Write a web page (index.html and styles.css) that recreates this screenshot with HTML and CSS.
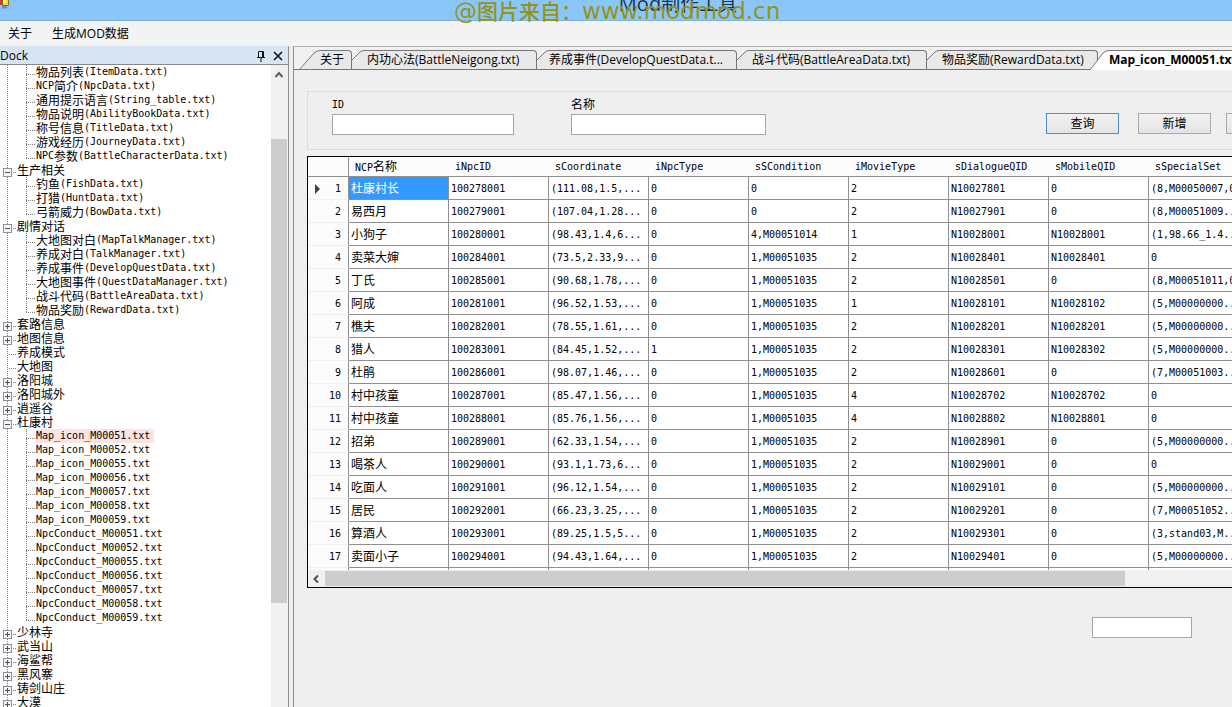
FILE: index.html
```html
<!DOCTYPE html>
<html lang="zh-CN">
<head>
<meta charset="utf-8">
<title>Mod制作工具</title>
<link rel="stylesheet" href="styles.css">
</head>
<body>
<div class="window">
  <header class="titlebar">
    <svg class="app-icon" width="11" height="9" viewBox="0 0 11 9"><path fill="#c8452c" d="M0 0h2v5H0z"/><path fill="#f5d33c" stroke="#8a6a20" d="M2.500-2h6v7.500h-6z"/><path fill="#5d8fe0" d="M2 6h5v2.500H2z"/><path fill="#fff3a0" d="M3 0h3v3H3z"/></svg>
    <h1 class="title">Mod<span class="title-cjk">制作工具</span></h1>
    <div class="watermark">@<span class="watermark-cjk">图片来自：</span>www.modmod.cn</div>
  </header>
  <nav class="menubar">
    <button class="menu-item">关于</button>
    <button class="menu-item">生成MOD数据</button>
  </nav>
  <div class="workspace">
    <aside class="dock">
      <div class="dock-head">
        <span class="dock-title">Dock</span>
        <button class="dock-btn" aria-label="固定"><svg width="10" height="12" viewBox="0 0 10 12"><path d="M2.500 7V1.500h5V7M6.500 2v5M1 7.500h8M5 8v4" fill="none" stroke="#111"/></svg></button>
        <button class="dock-btn" aria-label="关闭"><svg width="10" height="12" viewBox="0 0 10 12"><path d="M1 2l8 8M9 2l-8 8" fill="none" stroke="#111" stroke-width="1.600"/></svg></button>
      </div>
      <div class="dock-body">
        <ul class="tree">
          <li>
            <ul class="branch">
              <li><b>物品列表</b>(ItemData.txt)</li>
              <li>NCP<b>简介</b>(NpcData.txt)</li>
              <li><b>通用提示语言</b>(String_table.txt)</li>
              <li><b>物品说明</b>(AbilityBookData.txt)</li>
              <li><b>称号信息</b>(TitleData.txt)</li>
              <li><b>游戏经历</b>(JourneyData.txt)</li>
              <li>NPC<b>参数</b>(BattleCharacterData.txt)</li>
            </ul>
          </li>
          <li>
            <div class="node"><button class="toggle open" aria-label="折叠"></button><b>生产相关</b></div>
            <ul class="branch">
              <li><b>钓鱼</b>(FishData.txt)</li>
              <li><b>打猎</b>(HuntData.txt)</li>
              <li><b>弓箭威力</b>(BowData.txt)</li>
            </ul>
          </li>
          <li>
            <div class="node"><button class="toggle open" aria-label="折叠"></button><b>剧情对话</b></div>
            <ul class="branch">
              <li><b>大地图对白</b>(MapTalkManager.txt)</li>
              <li><b>养成对白</b>(TalkManager.txt)</li>
              <li><b>养成事件</b>(DevelopQuestData.txt)</li>
              <li><b>大地图事件</b>(QuestDataManager.txt)</li>
              <li><b>战斗代码</b>(BattleAreaData.txt)</li>
              <li><b>物品奖励</b>(RewardData.txt)</li>
            </ul>
          </li>
          <li><div class="node"><button class="toggle" aria-label="展开"></button><b>套路信息</b></div></li>
          <li><div class="node"><button class="toggle" aria-label="展开"></button><b>地图信息</b></div></li>
          <li><div class="node leaf"><b>养成模式</b></div></li>
          <li><div class="node leaf"><b>大地图</b></div></li>
          <li><div class="node"><button class="toggle" aria-label="展开"></button><b>洛阳城</b></div></li>
          <li><div class="node"><button class="toggle" aria-label="展开"></button><b>洛阳城外</b></div></li>
          <li><div class="node"><button class="toggle" aria-label="展开"></button><b>逍遥谷</b></div></li>
          <li>
            <div class="node"><button class="toggle open" aria-label="折叠"></button><b>杜康村</b></div>
            <ul class="branch">
              <li><span class="current">Map_icon_M00051.txt</span></li>
              <li>Map_icon_M00052.txt</li>
              <li>Map_icon_M00055.txt</li>
              <li>Map_icon_M00056.txt</li>
              <li>Map_icon_M00057.txt</li>
              <li>Map_icon_M00058.txt</li>
              <li>Map_icon_M00059.txt</li>
              <li>NpcConduct_M00051.txt</li>
              <li>NpcConduct_M00052.txt</li>
              <li>NpcConduct_M00055.txt</li>
              <li>NpcConduct_M00056.txt</li>
              <li>NpcConduct_M00057.txt</li>
              <li>NpcConduct_M00058.txt</li>
              <li>NpcConduct_M00059.txt</li>
            </ul>
          </li>
          <li><div class="node"><button class="toggle" aria-label="展开"></button><b>少林寺</b></div></li>
          <li><div class="node"><button class="toggle" aria-label="展开"></button><b>武当山</b></div></li>
          <li><div class="node"><button class="toggle" aria-label="展开"></button><b>海鲨帮</b></div></li>
          <li><div class="node"><button class="toggle" aria-label="展开"></button><b>黑风寨</b></div></li>
          <li><div class="node"><button class="toggle" aria-label="展开"></button><b>铸剑山庄</b></div></li>
          <li><div class="node"><button class="toggle" aria-label="展开"></button><b>大漠</b></div></li>
        </ul>
        <div class="vscroll">
          <svg class="arrow" width="16" height="17" viewBox="0 0 16 17"><path d="M4.500 12L8 8l3.500 4" fill="none" stroke="#606060" stroke-width="2"/></svg>
          <div class="before"></div><div class="thumb"></div><div class="after"></div>
        </div>
      </div>
    </aside>
    <main class="document">
      <div class="tabs">
        <button class="tab first"><svg class="edge" width="20" height="19" viewBox="0 0 20 19"><path class="fill" d="M0 19L14 3Q17 .5 20 .5V19z"/><path class="line" d="M0 19L14 3Q17 .5 20 .5"/></svg><span>关于</span></button>
        <button class="tab t2"><svg class="edge" width="12" height="19" viewBox="0 0 12 19"><path class="fill" d="M0 19V10L7 3Q9 .5 12 .5V19z"/><path class="line" d="M0 10L7 3Q9 .5 12 .5"/></svg><span>内功心法(BattleNeigong.txt)</span></button>
        <button class="tab t3"><svg class="edge" width="12" height="19" viewBox="0 0 12 19"><path class="fill" d="M0 19V10L7 3Q9 .5 12 .5V19z"/><path class="line" d="M0 10L7 3Q9 .5 12 .5"/></svg><span>养成事件(DevelopQuestData.t...</span></button>
        <button class="tab t4"><svg class="edge" width="12" height="19" viewBox="0 0 12 19"><path class="fill" d="M0 19V10L7 3Q9 .5 12 .5V19z"/><path class="line" d="M0 10L7 3Q9 .5 12 .5"/></svg><span>战斗代码(BattleAreaData.txt)</span></button>
        <button class="tab t5"><svg class="edge" width="12" height="19" viewBox="0 0 12 19"><path class="fill" d="M0 19V10L7 3Q9 .5 12 .5V19z"/><path class="line" d="M0 10L7 3Q9 .5 12 .5"/></svg><span>物品奖励(RewardData.txt)</span></button>
        <button class="tab active"><svg class="edge" width="19" height="20" viewBox="0 0 19 20"><path class="fill" d="M0 20L13 3Q16 .5 19 .5V20z"/><path class="line" d="M0 20L13 3Q16 .5 19 .5"/></svg><span>Map_icon_M00051.txt</span></button>
      </div>
      <form class="filter">
        <div class="field"><label for="fid" class="mono">ID</label><input id="fid" type="text" class="w-id"></div>
        <div class="field"><label for="fname">名称</label><input id="fname" type="text" class="w-name"></div>
        <div class="actions">
          <button type="button" class="btn primary">查询</button>
          <button type="button" class="btn">新增</button>
          <button type="button" class="btn last" aria-label="操作"></button>
        </div>
      </form>
      <section class="gridbox">
        <div class="gridview">
          <table>
            <colgroup><col class="c-head"><col><col><col><col><col><col><col><col><col></colgroup>
            <thead><tr><th class="corner"></th><th>NCP<b>名称</b></th><th>iNpcID</th><th>sCoordinate</th><th>iNpcType</th><th>sSCondition</th><th>iMovieType</th><th>sDialogueQID</th><th>sMobileQID</th><th>sSpecialSet</th></tr></thead>
            <tbody>
              <tr><th><div class="rowhead"><svg width="5" height="10" viewBox="0 0 5 10"><path d="M0 0l5 5-5 5z" fill="#404040"/></svg>1</div></th><td class="selected"><b>杜康村长</b></td><td>100278001</td><td>(111.08,1.5,...</td><td>0</td><td>0</td><td>2</td><td>N10027801</td><td>0</td><td>(8,M00050007,0)</td></tr>
              <tr><th>2</th><td><b>易西月</b></td><td>100279001</td><td>(107.04,1.28...</td><td>0</td><td>0</td><td>2</td><td>N10027901</td><td>0</td><td>(8,M00051009...</td></tr>
              <tr><th>3</th><td><b>小狗子</b></td><td>100280001</td><td>(98.43,1.4,6...</td><td>0</td><td>4,M00051014</td><td>1</td><td>N10028001</td><td>N10028001</td><td>(1,98.66_1.4...</td></tr>
              <tr><th>4</th><td><b>卖菜大婶</b></td><td>100284001</td><td>(73.5,2.33,9...</td><td>0</td><td>1,M00051035</td><td>2</td><td>N10028401</td><td>N10028401</td><td>0</td></tr>
              <tr><th>5</th><td><b>丁氏</b></td><td>100285001</td><td>(90.68,1.78,...</td><td>0</td><td>1,M00051035</td><td>2</td><td>N10028501</td><td>0</td><td>(8,M00051011,0)</td></tr>
              <tr><th>6</th><td><b>阿成</b></td><td>100281001</td><td>(96.52,1.53,...</td><td>0</td><td>1,M00051035</td><td>1</td><td>N10028101</td><td>N10028102</td><td>(5,M00000000...</td></tr>
              <tr><th>7</th><td><b>樵夫</b></td><td>100282001</td><td>(78.55,1.61,...</td><td>0</td><td>1,M00051035</td><td>2</td><td>N10028201</td><td>N10028201</td><td>(5,M00000000...</td></tr>
              <tr><th>8</th><td><b>猎人</b></td><td>100283001</td><td>(84.45,1.52,...</td><td>1</td><td>1,M00051035</td><td>2</td><td>N10028301</td><td>N10028302</td><td>(5,M00000000...</td></tr>
              <tr><th>9</th><td><b>杜鹃</b></td><td>100286001</td><td>(98.07,1.46,...</td><td>0</td><td>1,M00051035</td><td>2</td><td>N10028601</td><td>0</td><td>(7,M00051003...</td></tr>
              <tr><th>10</th><td><b>村中孩童</b></td><td>100287001</td><td>(85.47,1.56,...</td><td>0</td><td>1,M00051035</td><td>4</td><td>N10028702</td><td>N10028702</td><td>0</td></tr>
              <tr><th>11</th><td><b>村中孩童</b></td><td>100288001</td><td>(85.76,1.56,...</td><td>0</td><td>1,M00051035</td><td>4</td><td>N10028802</td><td>N10028801</td><td>0</td></tr>
              <tr><th>12</th><td><b>招弟</b></td><td>100289001</td><td>(62.33,1.54,...</td><td>0</td><td>1,M00051035</td><td>2</td><td>N10028901</td><td>0</td><td>(5,M00000000...</td></tr>
              <tr><th>13</th><td><b>喝茶人</b></td><td>100290001</td><td>(93.1,1.73,6...</td><td>0</td><td>1,M00051035</td><td>2</td><td>N10029001</td><td>0</td><td>0</td></tr>
              <tr><th>14</th><td><b>吃面人</b></td><td>100291001</td><td>(96.12,1.54,...</td><td>0</td><td>1,M00051035</td><td>2</td><td>N10029101</td><td>0</td><td>(5,M00000000...</td></tr>
              <tr><th>15</th><td><b>居民</b></td><td>100292001</td><td>(66.23,3.25,...</td><td>0</td><td>1,M00051035</td><td>2</td><td>N10029201</td><td>0</td><td>(7,M00051052...</td></tr>
              <tr><th>16</th><td><b>算酒人</b></td><td>100293001</td><td>(89.25,1.5,5...</td><td>0</td><td>1,M00051035</td><td>2</td><td>N10029301</td><td>0</td><td>(3,stand03,M...</td></tr>
              <tr><th>17</th><td><b>卖面小子</b></td><td>100294001</td><td>(94.43,1.64,...</td><td>0</td><td>1,M00051035</td><td>2</td><td>N10029401</td><td>0</td><td>(5,M00000000...</td></tr>
              <tr><th></th><td></td><td></td><td></td><td></td><td></td><td></td><td></td><td></td><td></td></tr>
            </tbody>
          </table>
        </div>
        <div class="hscroll">
          <svg class="arrow" width="17" height="16" viewBox="0 0 17 16"><path d="M10 4.500L6.500 8l3.500 3.500" fill="none" stroke="#505050" stroke-width="2"/></svg>
          <div class="thumb"></div><div class="after"></div>
        </div>
      </section>
      <footer class="foot"><input type="text" class="w-foot" aria-label="页码"></footer>
    </main>
  </div>
</div>
</body>
</html>
```
FILE: styles.css
```css
* { box-sizing: border-box; }
html, body { height: 100%; margin: 0; }
body {
  overflow: hidden;
  background: #efefef;
  color: #000;
  font: 12px/14px "Open Sans", "Noto Sans CJK SC", sans-serif;
}
button, input { font: inherit; color: inherit; margin: 0; border-radius: 0; }
button { padding: 0; border: 0; background: none; }
ul { margin: 0; padding: 0; list-style: none; }
b {
  font: 12px/14px "Noto Sans CJK SC", sans-serif;
}

.window { display: flex; flex-direction: column; height: 100vh; }

.titlebar {
  position: relative;
  display: flex;
  justify-content: center;
  flex: none;
  height: 21px;
  background: #8bc6fb;
  border-bottom: 1px solid #7fb0dc;
}
.app-icon { position: absolute; left: 0; top: 0; }
.title {
  margin: -9px 0 0 124px;
  color: #1c3450;
  font: 20px/26px "Open Sans", "Noto Sans CJK SC", sans-serif;
}
.title-cjk { font-size: 19px; }
.watermark {
  position: absolute;
  left: 454px;
  top: -2px;
  color: #949412;
  font: 23px/24px "DejaVu Sans", "Noto Sans CJK SC", sans-serif;
  white-space: nowrap;
}
.watermark-cjk { font-family: "Noto Sans CJK SC", sans-serif; font-size: 21px; font-weight: 500; }

.menubar {
  display: flex;
  flex: none;
  gap: 20px;
  height: 25px;
  padding: 0 8px;
  background: #f3f3f3;
}

.workspace { display: flex; flex: 1; min-height: 0; gap: 4px; }

.dock {
  display: flex;
  flex-direction: column;
  flex: none;
  width: 289px;
  border-right: 1px solid #8e8e8e;
}
.dock-head {
  display: flex;
  align-items: center;
  gap: 7px;
  flex: none;
  height: 19px;
  padding: 1px 5px 0 0;
  background: #d7e4f2;
  border-bottom: 1px solid #888;
}
.dock-title { flex: 1; }
.dock-btn { display: flex; }
.dock-body { display: flex; flex: 1; min-height: 0; background: #fff; }

.tree {
  flex: 1;
  overflow: hidden;
  background: repeating-linear-gradient(#808080 0 1px, transparent 1px 2px) 7px 0 / 1px 100% no-repeat;
  font: 10px/14px "DejaVu Sans Mono", monospace;
  white-space: nowrap;
}
.node { display: flex; height: 14px; }
.node::after {
  content: "";
  order: 1;
  width: 5px;
  height: 1px;
  margin-top: 9px;
  background: repeating-linear-gradient(90deg, transparent 0 1px, #808080 1px 2px);
}
.node b { order: 2; }
.leaf { padding-left: 8px; }
.leaf::after { width: 9px; }
.toggle {
  flex: none;
  width: 9px;
  height: 9px;
  margin: 5px 0 0 3px;
  border: 1px solid #8c929c;
  background:
    linear-gradient(#4a5260, #4a5260) 1px 3px / 5px 1px no-repeat,
    linear-gradient(#4a5260, #4a5260) 3px 1px / 1px 5px no-repeat,
    #f6f6f6;
}
.toggle.open { background: linear-gradient(#4a5260, #4a5260) 1px 3px / 5px 1px no-repeat, #f6f6f6; }
.branch li { display: flex; height: 14px; padding-left: 26px; }
.branch li::before {
  content: "";
  flex: none;
  width: 10px;
  height: 14px;
  background:
    repeating-linear-gradient(#808080 0 1px, transparent 1px 2px) 0 0 / 1px 100% no-repeat,
    repeating-linear-gradient(90deg, #808080 0 1px, transparent 1px 2px) 0 9px / 9px 1px no-repeat;
}
.branch li:last-child::before {
  background-size: 1px 9px, 9px 1px;
}
.current { padding-right: 4px; background: #fbe3e1; }

.vscroll { display: flex; flex-direction: column; flex: none; width: 17px; padding-right: 1px; background: #f0f0f0; }
.thumb { background: #cdcdcd; }
.vscroll .before { flex: 57; }
.vscroll .thumb { flex: 464; }
.vscroll .after { flex: 104; }

.document {
  display: flex;
  flex-direction: column;
  flex: 1;
  min-width: 0;
  overflow: hidden;
  border-left: 1px solid #8e8e8e;
  border-top: 1px solid #b4b4b4;
}
.tabs {
  display: flex;
  flex: none;
  height: 23px;
  padding: 3px 0 0 6px;
  background: #f0f0f0;
  border-bottom: 1px solid #777;
}
.tab {
  display: flex;
  flex: none;
  height: 19px;
  white-space: nowrap;
}
.tab span {
  flex: 1;
  height: 19px;
  padding-left: 3px;
  line-height: 18px;
  text-align: left;
  background: #e9e9e9;
  border: 1px solid #777;
  border-width: 1px 1px 0 0;
  border-radius: 0 4px 0 0;
}
.edge { flex: none; }
.edge .fill { fill: #e9e9e9; }
.edge .line { fill: none; stroke: #777; }
.first { width: 52px; }
.t2 { width: 185px; }
.t3 { width: 200px; }
.t4 { width: 190px; }
.t5 { width: 171px; }
.tab.first span, .tab.t3 span, .tab.active span { padding-left: 0; }
.active { width: 170px; height: 20px; margin-left: -8px; font-weight: 700; }
.tab.active span { height: 20px; background: #fff; border-radius: 0; }
.active .fill { fill: #fff; }

.filter {
  display: flex;
  flex: none;
  gap: 57px;
  width: 1100px;
  margin: 21px 0 0 13px;
  padding: 6px 24px 14px;
  border: 1px solid #dcdcdc;
}
.field { display: flex; flex-direction: column; gap: 2px; }
.mono { font: 10px/14px "DejaVu Sans Mono", monospace; }
input {
  height: 21px;
  padding: 0 3px;
  border: 1px solid #a5a5a5;
  background: #fff;
}
.w-id { width: 182px; }
.w-name { width: 195px; }
.w-foot { width: 100px; }
.actions { display: flex; align-items: flex-end; gap: 19px; padding: 0 0 1px 223px; }
.btn {
  width: 73px;
  height: 21px;
  border: 1px solid #a9a9a9;
  background: linear-gradient(#f1f1f1, #e4e4e4);
}
.btn.primary { border-color: #4a8fcc; }
.btn.last { margin-left: -4px; }

.gridbox {
  display: flex;
  flex-direction: column;
  flex: 1;
  min-height: 0;
  margin: 6px 0 0 13px;
  border: 1px solid #000;
  border-right: 0;
}
.gridview { flex: 1; min-height: 0; overflow: hidden; background: #fff; }
table {
  width: 941px;
  table-layout: fixed;
  border-collapse: separate;
  border-spacing: 0;
  font: 10px/14px "DejaVu Sans Mono", monospace;
  white-space: nowrap;
}
col { width: 100px; }
.c-head { width: 41px; }
th, td { padding: 1px 2px 0; overflow: hidden; border: 0 solid #8f8f8f; text-align: left; font-weight: 400; }
td { height: 23px; border-width: 0 1px 1px 0; }
thead th { height: 20px; padding-left: 6px; border-bottom-width: 1px; background: #fcfcfc; }
thead .corner, tbody th { border-right-width: 1px; }
tbody th { padding-right: 7px; padding-left: 7px; text-align: right; background: #fcfcfc; border-bottom: 1px solid #f0f0f0; }
.rowhead { display: flex; align-items: center; justify-content: space-between; }
.selected { background: #3399ff; color: #fff; }

.hscroll { display: flex; flex: none; height: 17px; padding: 1px 0; background: #f0f0f0; }
.hscroll .arrow { flex: none; }
.hscroll .thumb { flex: 800; }
.hscroll .after { flex: 107; }

.foot {
  display: flex;
  flex: none;
  justify-content: flex-end;
  height: 119px;
  padding: 29px 40px 0 0;
}
```
